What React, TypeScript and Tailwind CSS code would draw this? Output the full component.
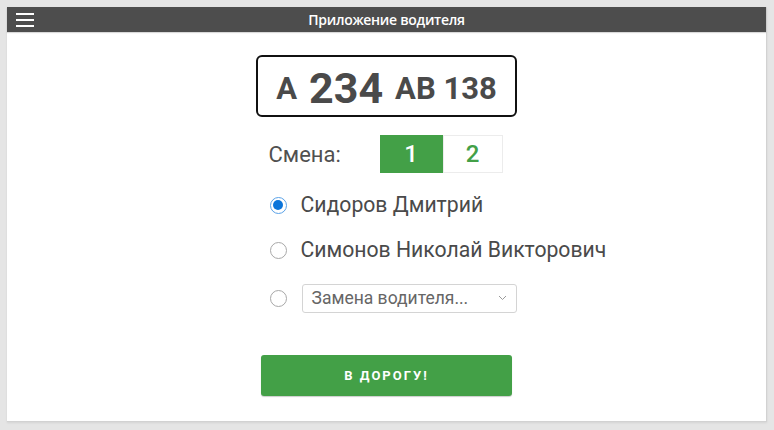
import { useState } from "react";

const drivers = ["Сидоров Дмитрий", "Симонов Николай Викторович"];

function Radio({ checked }: { checked: boolean }) {
  return checked ? (
    <span className="w-[17px] h-[17px] rounded-full border border-[#5aa2e8] flex items-center justify-center shrink-0">
      <span className="w-[10px] h-[10px] rounded-full bg-[#0a74da]" />
    </span>
  ) : (
    <span className="w-[17px] h-[17px] rounded-full border border-[#a8a8a8] bg-white shrink-0" />
  );
}

export default function App() {
  const [shift, setShift] = useState(1);
  const [driver, setDriver] = useState(0);

  return (
    <div className="w-[774px] h-[430px] bg-[#e5e5e5] p-[7px] pb-[8px] font-['Roboto',sans-serif]">
      <div className="h-full bg-white border-b border-r border-[#d2d2d2] shadow-[0_1px_2px_rgba(0,0,0,0.08)] flex flex-col">

        {/* Шапка */}
        <div className="relative h-[25px] bg-[#4d4d4d] flex items-center justify-center shadow-[0_1px_1px_rgba(0,0,0,0.15)]">
          <div className="absolute left-[9px] top-[6px] flex flex-col gap-[4px]">
            <span className="block w-[18px] h-[2px] bg-white" />
            <span className="block w-[18px] h-[2px] bg-white" />
            <span className="block w-[18px] h-[2px] bg-white" />
          </div>
          <span className="text-white text-[14px] font-semibold font-['Open_Sans',sans-serif] tracking-[-0.3px]">
            Приложение водителя
          </span>
        </div>

        {/* Номер */}
        <div className="flex flex-col items-center">
          <div className="mt-[23px] w-[261px] h-[62px] border-2 border-[#111] rounded-[6px] flex items-center justify-center gap-[12px] text-[#4a4a4a] font-bold leading-none pt-[4px]">
            <span className="text-[31px]">A</span>
            <span className="text-[43px]">234</span>
            <span className="text-[31px]">AB 138</span>
          </div>

          <div className="w-[236px] mt-[18px] ml-[-2px]">
            <div className="h-[38px] flex items-center pl-[1px]">
              <span className="text-[22px] text-[#505050] w-[111px]">Смена:</span>
              <div className="flex h-[38px]">
                {[1, 2].map((n) => (
                  <button
                    key={n}
                    onClick={() => setShift(n)}
                    className={
                      shift === n
                        ? "w-[63px] bg-[#43a047] text-white text-[24px] font-medium flex items-center justify-center"
                        : "w-[60px] bg-white text-[#43a047] text-[24px] font-medium border border-[#ececec] flex items-center justify-center"
                    }
                  >
                    {n}
                  </button>
                ))}
              </div>
            </div>

            <div className="mt-[12px]">
              {drivers.map((name, i) => (
                <div
                  key={name}
                  onClick={() => setDriver(i)}
                  className={`h-[40px] flex items-center gap-[14px] pl-[2px] whitespace-nowrap cursor-pointer ${i === 0 ? "" : "mt-[5px]"}`}
                >
                  <Radio checked={driver === i} />
                  <span className="text-[21.2px] text-[#4a4a4a]">{name}</span>
                </div>
              ))}
              <div className="mt-[8px] h-[40px] flex items-center gap-[14px] pl-[2px] whitespace-nowrap" onClick={() => setDriver(2)}>
                <Radio checked={driver === 2} />
                <div className="ml-[1px] w-[215px] shrink-0 h-[29px] border border-[#d4d4d4] rounded-[3px] flex items-center justify-between pl-[9px] pr-[9px]">
                  <span className="text-[17.5px] text-[#666]">Замена водителя...</span>
                  <svg width="9" height="6" viewBox="0 0 9 6" fill="none">
                    <path d="M1 1l3.5 3.5L8 1" stroke="#9a9a9a" strokeWidth="1" />
                  </svg>
                </div>
              </div>
            </div>
          </div>

          <button className="mt-[37px] w-[251px] h-[41px] bg-[#43a047] rounded-[3px] text-white text-[13px] font-bold tracking-[2px] shadow-[0_1px_1px_rgba(0,0,0,0.2)]">
            В ДОРОГУ!
          </button>
        </div>
      </div>
    </div>
  );
}
